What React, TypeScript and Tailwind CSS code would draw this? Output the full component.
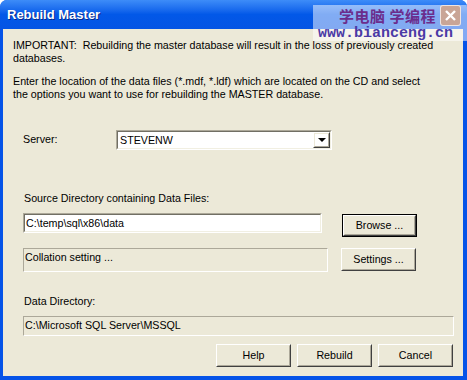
import React from "react";

const sunken = "border border-t-[#aca899] border-l-[#aca899] border-b-white border-r-white";
const sunkenInner = "border border-t-[#716f64] border-l-[#716f64] border-b-[#f1efe2] border-r-[#f1efe2]";

function Button({ children, focused, className }: { children?: React.ReactNode; focused?: boolean; className?: string }) {
  return (
    <div className={`flex flex-col ${focused ? "border border-black" : ""} ${className ?? ""}`}>
      <div className="flex-1 flex flex-col border border-t-white border-l-white border-b-[#404040] border-r-[#404040]">
        <div className="flex-1 flex items-center justify-center border border-t-[#ece9d8] border-l-[#ece9d8] border-b-[#aca899] border-r-[#aca899] text-black">
          {children}
        </div>
      </div>
    </div>
  );
}

const App: React.FC = () => {
  return (
    <div
      className="w-[467px] h-[380px] flex flex-col bg-[#0553e8] rounded-t-[7px] overflow-hidden relative text-[10.7px] leading-[13px] text-black whitespace-nowrap"
      style={{ fontFamily: "'Liberation Sans', Arial, sans-serif" }}
    >
      {/* title bar */}
      <div className="h-[29px] shrink-0 flex items-center px-[7px] bg-gradient-to-b from-[#3d8cf8] via-[#0258e8] to-[#0554e4]">
        <span className="text-white font-bold text-[13px] [text-shadow:1px_1px_0_#0a2a8a]">Rebuild Master</span>
      </div>

      {/* body */}
      <div className="flex-1 ml-[3px] mr-[4px] mb-[4px] bg-[#ece9d8] flex flex-col">
        <div className="pl-[10px] pt-[10px]">
          <p>IMPORTANT:&nbsp; Rebuilding the master database will result in the loss of previously created</p>
          <p>databases.</p>
        </div>
        <div className="pl-[10px] mt-[10px]">
          <p>Enter the location of the data files (*.mdf, *.ldf) which are located on the CD and select</p>
          <p>the options you want to use for rebuilding the MASTER database.</p>
        </div>

        {/* server */}
        <div className="flex mt-[29px] pl-[20px]">
          <div className="w-[93px] pt-[3px]">Server:</div>
          <div className={`w-[216px] h-[20px] bg-white ${sunken}`}>
            <div className={`h-full flex items-center ${sunkenInner}`}>
              <span className="flex-1 pl-[2px] pt-[1px]">STEVENW</span>
              <Button className="w-[17px] h-[16px]">
                <div className="w-0 h-0 border-l-[4px] border-r-[4px] border-t-[4px] border-l-transparent border-r-transparent border-t-black" />
              </Button>
            </div>
          </div>
        </div>

        <div className="pl-[21px] mt-[42px]">Source Directory containing Data Files:</div>

        <div className="flex items-start pl-[20px] mt-[8px]">
          <div className={`w-[299px] h-[20px] bg-white ${sunken}`}>
            <div className={`h-full flex items-center pl-[1px] ${sunkenInner}`}>C:\temp\sql\x86\data</div>
          </div>
          <Button focused className="w-[75px] h-[23px] ml-[20px] mt-[1px]">Browse ...</Button>
        </div>

        <div className="flex items-start pl-[20px] mt-[11px]">
          <div className={`w-[305px] h-[24px] ${sunken}`}>
            <div className="pl-[1px] pt-[2px]">Collation setting ...</div>
          </div>
          <Button className="w-[75px] h-[23px] ml-[13px]">Settings ...</Button>
        </div>

        <div className="pl-[21px] mt-[23px]">Data Directory:</div>

        <div className="pl-[20px] mt-[8px]">
          <div className={`w-[431px] h-[20px] ${sunken}`}>
            <div className="pl-[1px] pt-[2px]">C:\Microsoft SQL Server\MSSQL</div>
          </div>
        </div>

        <div className="flex justify-end gap-[6px] pr-[10px] mt-[8px]">
          <Button className="w-[75px] h-[23px]">Help</Button>
          <Button className="w-[75px] h-[23px]">Rebuild</Button>
          <Button className="w-[75px] h-[23px]">Cancel</Button>
        </div>
      </div>

      {/* watermark overlay */}
      <div className="absolute left-[313px] top-[5px] w-[154px] h-[36px] bg-white/50 flex flex-col items-start">
        <div className="flex items-center w-full">
          <span
            className="ml-[26px] mt-[1px] text-[15px] leading-[18px] font-bold text-[#6b2d8c] tracking-[0.5px]"
            style={{ fontFamily: "'Noto Sans CJK SC', sans-serif" }}
          >
            学电脑&nbsp;学编程
          </span>
          <div className="ml-auto mr-[6px] w-[21px] h-[21px] rounded-[3px] bg-[#c9a596] border border-white/70 flex items-center justify-center">
            <svg width="13" height="13" viewBox="0 0 13 13">
              <path d="M2 2 L11 11 M11 2 L2 11" stroke="white" strokeWidth="2.4" />
            </svg>
          </div>
        </div>
        <span
          className="ml-[5px] mt-[1px] text-[15px] leading-[14px] font-bold text-[#4b3aa6]"
          style={{ fontFamily: "'Liberation Mono', monospace" }}
        >
          www.bianceng.cn
        </span>
      </div>
    </div>
  );
};

export default App;
